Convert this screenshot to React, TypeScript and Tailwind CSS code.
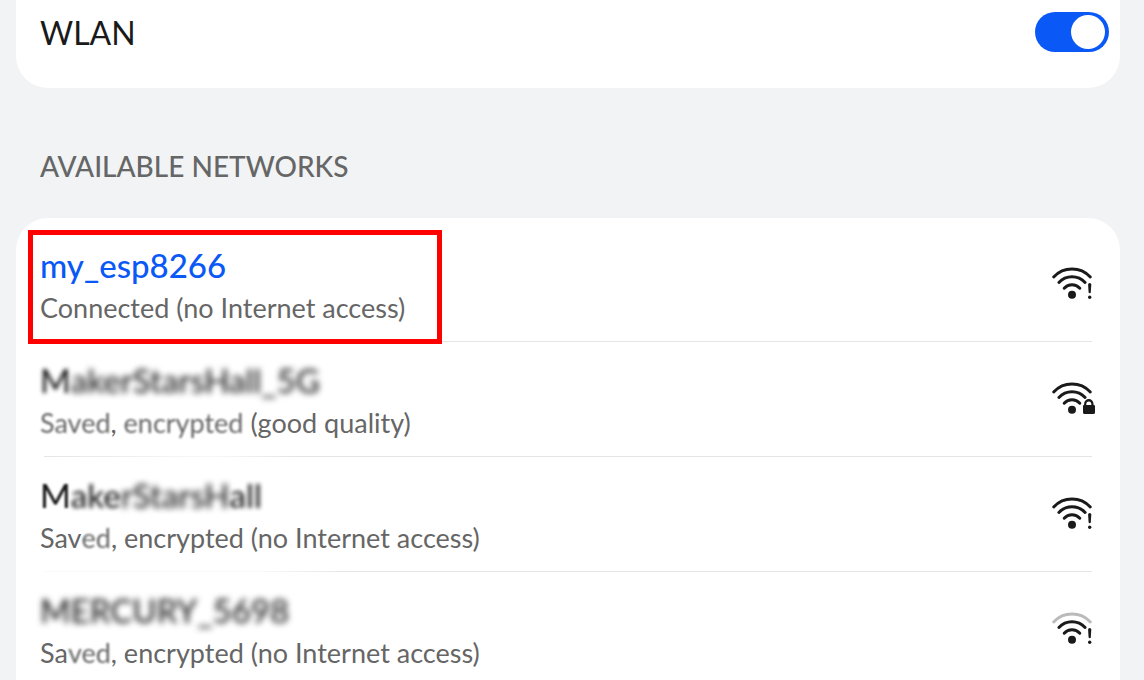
import { useState } from "react";

type Blur = "none" | "soft" | "medium" | "strong";
type Segment = { text: string; blur?: Blur };
type Network = {
  id: string;
  name: Segment[];
  status: Segment[];
  connected?: boolean;
  weak?: boolean;
  badge: "alert" | "lock";
  divider: string;
};

const blurClass: Record<Blur, string> = {
  none: "",
  soft: "inline-block blur-[1px]",
  medium: "inline-block blur-[2px]",
  strong: "inline-block blur-[3px]",
};

const networks: Network[] = [
  {
    id: "esp",
    name: [{ text: "my_esp8266" }],
    status: [{ text: "Connected (no Internet access)" }],
    connected: true,
    badge: "alert",
    divider: "bg-[#e5e5e5]",
  },
  {
    id: "hall-5g",
    name: [
      { text: "M", blur: "medium" },
      { text: "akerStarsHall_", blur: "strong" },
      { text: "5G", blur: "strong" },
    ],
    status: [
      { text: "Saved", blur: "soft" },
      { text: ", " },
      { text: "encrypted", blur: "soft" },
      { text: " (good quality)" },
    ],
    badge: "lock",
    divider:
      "bg-linear-to-r from-[#e5e5e5] via-[#f8f8f8] via-[16%] to-[#e5e5e5] to-[24%]",
  },
  {
    id: "hall",
    name: [
      { text: "M", blur: "soft" },
      { text: "ake", blur: "medium" },
      { text: "rStarsH", blur: "strong" },
      { text: "all", blur: "medium" },
    ],
    status: [
      { text: "Sav" },
      { text: "ed", blur: "soft" },
      { text: ", encrypted (no Internet access)" },
    ],
    badge: "alert",
    divider: "bg-linear-to-r from-[#fafafa] from-[20%] to-[#e5e5e5] to-[29%]",
  },
  {
    id: "mercury",
    name: [
      { text: "MERCURY_", blur: "strong" },
      { text: "5698", blur: "strong" },
    ],
    status: [
      { text: "Sa" },
      { text: "ved", blur: "soft" },
      { text: ", encrypted (no Internet access)" },
    ],
    weak: true,
    badge: "alert",
    divider: "bg-[#e5e5e5]",
  },
];

function WifiIcon({ weak, badge }: { weak?: boolean; badge: "alert" | "lock" }) {
  return (
    <svg
      viewBox="0 0 46 44"
      className="h-11 w-[46px] shrink-0"
      fill="none"
      stroke="#1a1a1a"
      strokeWidth="3"
      strokeLinecap="round"
      aria-hidden="true"
    >
      <path d="M3.7 15A25 25 0 0 1 40.3 15" stroke={weak ? "#bababa" : "#1a1a1a"} />
      <path d="M8.9 20.4A17.9 17.9 0 0 1 35.1 20.4" />
      <path d="M14.2 26.2A10.8 10.8 0 0 1 29.8 26.2" />
      <circle cx="22" cy="32.7" r="4" fill="#1a1a1a" stroke="none" />
      {badge === "alert" ? (
        <g fill="#1a1a1a" stroke="none">
          <path d="M38.1 22.6Q38.1 21.1 39.7 21.1T41.3 22.6L40.8 30.3Q40.7 31.2 39.7 31.2T38.6 30.3Z" />
          <circle cx="39.7" cy="35.3" r="1.7" />
        </g>
      ) : (
        <g>
          <path
            d="M33 29.3Q33 27.8 34.1 27.8V26.8A4.7 4.7 0 0 1 43.5 26.8V27.8Q45 27.8 45 29.3V35.5Q45 37.1 43.4 37.1H34.6Q33 37.1 33 35.5Z"
            fill="#1a1a1a"
            stroke="#fff"
            strokeWidth="2"
            paintOrder="stroke"
          />
          <path
            d="M36.3 28V26.9A2.5 2.5 0 0 1 41.3 26.9V28Z"
            fill="#fff"
            stroke="none"
          />
        </g>
      )}
    </svg>
  );
}

function Segments({ items }: { items: Segment[] }) {
  return (
    <>
      {items.map((s, i) => (
        <span key={i} className={blurClass[s.blur ?? "none"]}>
          {s.text}
        </span>
      ))}
    </>
  );
}

function NetworkRow({ network }: { network: Network }) {
  return (
    <li className="relative">
      <button type="button" className="flex h-[114px] w-full items-center justify-between px-6 text-left">
        <span className="block pt-1.5">
          <span
            className={
              network.connected
                ? "block text-[33px] leading-[42px] font-medium text-[#0a59f7]"
                : "block text-[33px] leading-[42px] font-medium text-[#1a1a1a]"
            }
          >
            <Segments items={network.name} />
          </span>
          <span className="block text-[27px] leading-[44px] text-[#666666]">
            <Segments items={network.status} />
          </span>
        </span>
        <WifiIcon weak={network.weak} badge={network.badge} />
      </button>
      <div className={`mr-7 ml-7 h-px ${network.divider}`} />
      {network.connected && (
        <div className="pointer-events-none absolute top-[3px] left-3 h-[114px] w-[414px] border-[5px] border-[#ff0000]" />
      )}
    </li>
  );
}

export default function App() {
  const [on, setOn] = useState(true);
  return (
    <main className="h-screen overflow-hidden bg-[#f1f3f5] pr-6 pl-4 font-['Lato',sans-serif]">
      <section className="flex h-[88px] items-start justify-between rounded-b-[32px] bg-white pt-3 pr-[11px] pl-6">
        <span id="wlan" className="text-[32px] leading-[42px] text-[#1a1a1a]">
          WLAN
        </span>
        <button
          type="button"
          role="switch"
          aria-checked={on}
          aria-labelledby="wlan"
          onClick={() => setOn(!on)}
          className={
            on
              ? "flex h-10 w-[74px] items-center justify-end rounded-full bg-[#0a59f7] px-1"
              : "flex h-10 w-[74px] items-center justify-start rounded-full bg-[#d8d9db] px-1"
          }
        >
          <span className="size-[34px] rounded-full bg-white" />
        </button>
      </section>
      <h2 className="flex h-[130px] items-center px-6 pt-[26px] text-[28px] leading-9 font-medium text-[#666666]">
        AVAILABLE NETWORKS
      </h2>
      <ul className="rounded-t-[32px] bg-white pt-[9px]">
        {networks.map((n) => (
          <NetworkRow key={n.id} network={n} />
        ))}
      </ul>
    </main>
  );
}
